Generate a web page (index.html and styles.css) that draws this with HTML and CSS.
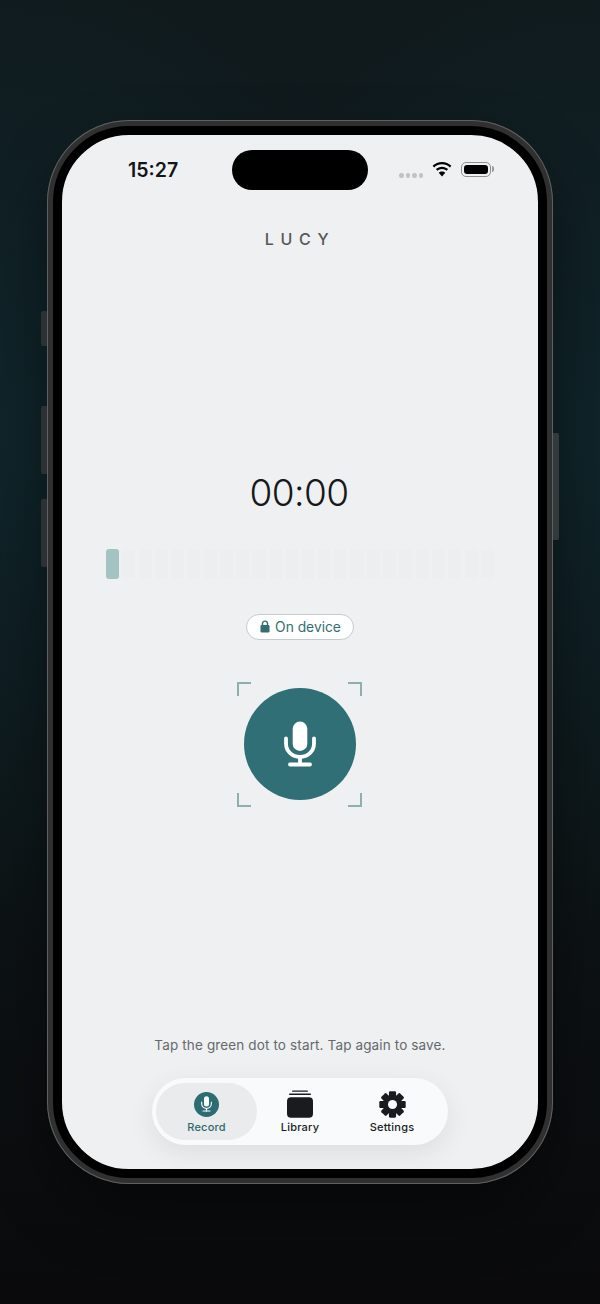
FILE: index.html
```html
<!DOCTYPE html>
<html lang="en">
<head>
<meta charset="utf-8">
<title>Lucy</title>
<link rel="stylesheet" href="styles.css">
</head>
<body>
<div class="phone">
  <span class="side side-silent"></span>
  <span class="side side-up"></span>
  <span class="side side-down"></span>
  <span class="side side-power"></span>
  <main class="screen">
    <div class="island"></div>
    <header class="status">
      <span class="clock">15:27</span>
      <div class="status-icons">
        <span class="dots"><i></i><i></i><i></i><i></i></span>
        <svg class="wifi" viewBox="0 0 20 15" width="20" height="15"><path d="M10 2.200c3 0 5.800 1.200 7.900 3.200l1.500-1.600C16.900 1.400 13.600 0 10 0S3.100 1.400.6 3.800l1.500 1.600C4.200 3.400 7 2.200 10 2.200z"/><path d="M10 6.900c1.800 0 3.400.7 4.600 1.800l1.500-1.600C14.500 5.600 12.300 4.700 10 4.700s-4.500.9-6.100 2.400l1.500 1.600C6.600 7.600 8.200 6.900 10 6.900z"/><path d="M10 9.400c-1.300 0-2.400.5-3.300 1.300L10 14.500l3.300-3.800c-.9-.8-2-1.300-3.300-1.300z"/></svg>
        <span class="battery"><span class="battery-fill"></span></span>
      </div>
    </header>
    <h1 class="title">LUCY</h1>
    <div class="timer">00:00</div>
    <div class="meter">
      <span class="bar bar-on"></span><span class="bar"></span><span class="bar"></span><span class="bar"></span><span class="bar"></span><span class="bar"></span><span class="bar"></span><span class="bar"></span><span class="bar"></span><span class="bar"></span><span class="bar"></span><span class="bar"></span><span class="bar"></span><span class="bar"></span><span class="bar"></span><span class="bar"></span><span class="bar"></span><span class="bar"></span><span class="bar"></span><span class="bar"></span><span class="bar"></span><span class="bar"></span><span class="bar"></span><span class="bar"></span>
    </div>
    <div class="chip">
      <svg viewBox="0 0 10 13" width="10" height="13"><path d="M2.500 5.500V3.600a2.500 2.500 0 0 1 5 0v1.900" fill="none" stroke="currentColor" stroke-width="1.400"/><rect x="0.500" y="5" width="9" height="7.500" rx="1.300" fill="currentColor"/></svg>
      <span>On device</span>
    </div>
    <div class="record-wrap">
      <span class="corner tl"></span><span class="corner tr"></span><span class="corner bl"></span><span class="corner br"></span>
      <button class="record" aria-label="Record">
        <svg viewBox="0 0 32 46" width="32" height="46" fill="none" stroke="#fff" stroke-linecap="round"><rect x="8.700" y="0.500" width="14.600" height="29.500" rx="7.300" fill="#fff" stroke="none"/><path d="M2 17.500v5c0 7.800 6.300 13.500 14 13.500s14-5.700 14-13.500v-5" stroke-width="3.800"/><path d="M16 36v7" stroke-width="3.800"/><path d="M6 43.500h20" stroke-width="3.800"/></svg>
      </button>
    </div>
    <p class="hint">Tap the green dot to start. Tap again to save.</p>
    <nav class="tabs">
      <a class="tab tab-active">
        <span class="tab-icon">
          <span class="tab-mic">
            <svg viewBox="0 0 32 46" width="11" height="16" fill="none" stroke="#fff" stroke-linecap="round"><rect x="8.700" y="0.500" width="14.600" height="29.500" rx="7.300" fill="#fff" stroke="none"/><path d="M2 17.500v5c0 7.800 6.300 13.500 14 13.500s14-5.700 14-13.500v-5" stroke-width="3.200"/><path d="M16 36v7" stroke-width="3.200"/><path d="M6 43.500h20" stroke-width="3.200"/></svg>
          </span>
        </span>
        <span>Record</span>
      </a>
      <a class="tab">
        <span class="tab-icon">
          <svg viewBox="0 0 26 28" width="26" height="28" fill="#1a1b1e"><rect x="5" y="0.400" width="16" height="1.300" rx=".6"/><rect x="2" y="3.600" width="22" height="1.400" rx=".7"/><rect x="0" y="7.300" width="26" height="20.400" rx="4"/></svg>
        </span>
        <span>Library</span>
      </a>
      <a class="tab">
        <span class="tab-icon">
          <svg viewBox="-14 -14 28 28" width="27" height="27" fill="#1a1b1e">
            <rect x="-3.700" y="-13.700" width="7.400" height="27.400" rx="1.200"/>
            <rect x="-3.700" y="-13.700" width="7.400" height="27.400" rx="1.200" transform="rotate(45)"/>
            <rect x="-3.700" y="-13.700" width="7.400" height="27.400" rx="1.200" transform="rotate(90)"/>
            <rect x="-3.700" y="-13.700" width="7.400" height="27.400" rx="1.200" transform="rotate(135)"/>
            <circle r="10"/>
            <circle r="4.700" fill="#f8fafc"/>
          </svg>
        </span>
        <span>Settings</span>
      </a>
    </nav>
  </main>
</div>
</body>
</html>
```
FILE: styles.css
```css
* { box-sizing: border-box; }
html, body { margin: 0; height: 100%; }
body {
  width: 600px;
  height: 1304px;
  overflow: hidden;
  padding-top: 120px;
  font-family: Inter, "Liberation Sans", sans-serif;
  background:
    radial-gradient(ellipse 420px 520px at 0 430px, rgba(16, 52, 60, .42), rgba(16, 52, 60, 0)),
    radial-gradient(ellipse 420px 520px at 600px 430px, rgba(16, 52, 60, .38), rgba(16, 52, 60, 0)),
    linear-gradient(180deg, #10191c 0%, #0f1a1e 35%, #0d1315 68%, #0a0a0c 100%);
}
.phone {
  position: relative;
  width: 506px;
  height: 1064px;
  margin: 0 auto;
  padding: 6px;
  border-radius: 82px;
  background: #303031;
  box-shadow: inset 0 0 0 1px #5f6061, 0 30px 60px rgba(0, 0, 0, .4);
}
.side {
  position: absolute;
  width: 6px;
  background: #2c3234;
  border-radius: 2px 0 0 2px;
}
.side-silent { left: -6px; top: 191px; height: 35px; }
.side-up { left: -6px; top: 286px; height: 68px; }
.side-down { left: -6px; top: 379px; height: 68px; }
.side-power { right: -6px; top: 313px; height: 107px; border-radius: 0 2px 2px 0; background: #333a3b; }
.screen {
  position: relative;
  display: flex;
  flex-direction: column;
  align-items: center;
  width: 494px;
  height: 1052px;
  border: 9px solid #000;
  border-radius: 76px;
  background: #eef0f2;
  overflow: hidden;
}
.island {
  position: absolute;
  top: 15px;
  left: 170px;
  width: 136px;
  height: 40px;
  border-radius: 20px;
  background: #000;
}
.status {
  display: flex;
  align-items: center;
  justify-content: space-between;
  width: 100%;
  height: 70px;
  padding: 0 47px 0 66px;
}
.clock {
  font-size: 19.500px;
  font-weight: 600;
  color: #141517;
}
.status-icons {
  display: flex;
  align-items: center;
  gap: 9px;
}
.dots {
  display: flex;
  gap: 2px;
  margin-top: 11px;
}
.dots i {
  width: 4.500px;
  height: 4.500px;
  border-radius: 50%;
  background: #c0c2c4;
}
.wifi { fill: #000; margin-top: -1px; }
.battery {
  position: relative;
  width: 30px;
  height: 15px;
  padding: 2px;
  margin-top: -1px;
  border: 1px solid #8e8f90;
  border-radius: 5px;
}
.battery::after {
  content: "";
  position: absolute;
  top: 3px;
  right: -4px;
  width: 2px;
  height: 6px;
  border-radius: 0 2px 2px 0;
  background: #9a9b9c;
}
.battery-fill {
  display: block;
  height: 100%;
  border-radius: 3px;
  background: #000;
}
.title {
  margin: 24px 0 0;
  font-size: 16px;
  line-height: 20px;
  font-weight: 500;
  letter-spacing: .42em;
  color: #55585b;
}
.timer {
  margin: 221px 2px 0 0;
  font-size: 37px;
  line-height: 46px;
  font-weight: 300;
  letter-spacing: -.6px;
  color: #17181a;
}
.meter {
  display: flex;
  justify-content: space-between;
  width: 100%;
  height: 30px;
  margin-top: 33px;
  padding: 0 44px;
}
.bar {
  flex: none;
  width: 13px;
  height: 30px;
  border-radius: 3px;
  background: #eceef0;
}
.bar-on { background: #a4c3c3; }
.chip {
  display: flex;
  align-items: center;
  justify-content: center;
  gap: 5px;
  width: 108px;
  height: 26px;
  margin-top: 35px;
  padding: 0 0 1px 1px;
  border: 1px solid #c6cccd;
  border-radius: 13px;
  background: #fff;
  font-size: 13.800px;
  color: #32706f;
}
.record-wrap {
  position: relative;
  display: flex;
  width: 125px;
  height: 125px;
  margin: 42px 1px 0 0;
  padding: 6px 6px 7px 6.500px;
}
.corner {
  position: absolute;
  width: 14px;
  height: 14px;
  border: 0 solid #8db0ae;
}
.tl { top: 0; left: 0; border-width: 2px 0 0 2px; }
.tr { top: 0; right: 0; border-width: 2px 2px 0 0; }
.bl { bottom: 0; left: 0; border-width: 0 0 2px 2px; }
.br { bottom: 0; right: 0; border-width: 0 2px 2px 0; }
.record {
  display: flex;
  align-items: center;
  justify-content: center;
  width: 112px;
  height: 112px;
  padding: 0;
  border: 0;
  border-radius: 50%;
  background: #306f75;
}
.hint {
  margin: auto 0 23px;
  font-size: 13.500px;
  line-height: 20px;
  letter-spacing: .01em;
  color: #66696c;
}
.tabs {
  display: grid;
  grid-template-columns: 101px 86px 98px;
  align-items: center;
  width: 296px;
  height: 67px;
  margin-bottom: 24px;
  padding: 5px 4px;
  border-radius: 34px;
  background: #f8fafc;
  box-shadow: 0 8px 28px rgba(0, 0, 0, .08);
}
.tab {
  display: flex;
  flex-direction: column;
  align-items: center;
  justify-content: flex-end;
  height: 57px;
  padding-bottom: 6px;
  border-radius: 29px;
  font-size: 11px;
  line-height: 14px;
  font-weight: 500;
  letter-spacing: .02em;
  color: #1a1b1e;
}
.tab-active {
  background: #e9ebed;
  color: #2d6a6a;
}
.tab-icon {
  display: flex;
  align-items: center;
  justify-content: center;
  height: 28px;
  margin-bottom: 2px;
}
.tab-mic {
  display: flex;
  align-items: center;
  justify-content: center;
  width: 25px;
  height: 25px;
  border-radius: 50%;
  background: #2c6c72;
}
```
